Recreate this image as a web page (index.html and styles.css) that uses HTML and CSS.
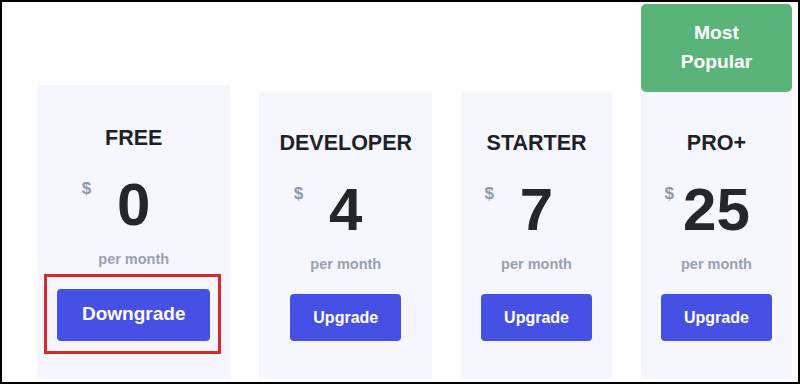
FILE: index.html
```html
<!DOCTYPE html>
<html lang="en">
<head>
    <meta charset="UTF-8">
    <meta name="viewport" content="width=device-width, initial-scale=1.0">
    <title>Pricing</title>
    <link rel="stylesheet" href="styles.css">
</head>
<body>
    <div class="frame">
        <div class="plan">
            <div class="card card-current">
                <h2>FREE</h2>
                <div class="price"><span class="currency">$</span><span class="amount">0</span></div>
                <div class="period">per month</div>
                <button class="btn btn-downgrade">Downgrade</button>
            </div>
        </div>
        <div class="plan">
            <div class="card">
                <h2>DEVELOPER</h2>
                <div class="price"><span class="currency">$</span><span class="amount">4</span></div>
                <div class="period">per month</div>
                <button class="btn">Upgrade</button>
            </div>
        </div>
        <div class="plan">
            <div class="card">
                <h2>STARTER</h2>
                <div class="price"><span class="currency">$</span><span class="amount">7</span></div>
                <div class="period">per month</div>
                <button class="btn">Upgrade</button>
            </div>
        </div>
        <div class="plan">
            <div class="badge">Most<br>Popular</div>
            <div class="card">
                <h2>PRO+</h2>
                <div class="price"><span class="currency">$</span><span class="amount">25</span></div>
                <div class="period">per month</div>
                <button class="btn">Upgrade</button>
            </div>
        </div>
    </div>
</body>
</html>
```

FILE: styles.css
```css
body {
    margin: 0;
    font-family: "Liberation Sans", Arial, sans-serif;
    background-color: #fff;
}
.frame {
    width: 800px;
    height: 384px;
    box-sizing: border-box;
    border: 2px solid #000;
    padding: 0 0 3px 35px;
    display: flex;
    align-items: flex-end;
    gap: 29px;
}
.plan {
    display: flex;
    flex-direction: column;
}
.badge {
    background-color: #5ab378;
    color: #fff;
    font-size: 19.2px;
    font-weight: bold;
    line-height: 29px;
    text-align: center;
    padding: 14px 10px 16px;
    border-radius: 5px;
}
.card {
    background-color: #f6f7fe;
    padding: 38px 20px;
    display: flex;
    flex-direction: column;
    align-items: center;
    text-align: center;
}
.card-current {
    padding-top: 40px;
}
.card h2 {
    margin: 0;
    font-size: 21.5px;
    line-height: 26px;
    color: #1e2127;
}
.price {
    margin-top: 24px;
    width: 104px;
    display: grid;
    grid-template-columns: 16px 1fr 16px;
}
.currency {
    margin-top: 5px;
    font-size: 17px;
    line-height: 17px;
    font-weight: bold;
    color: #8e98ab;
    text-align: left;
}
.amount {
    font-size: 60px;
    line-height: 60px;
    font-weight: bold;
    color: #23262b;
    text-align: center;
}
.period {
    margin-top: 15px;
    font-size: 14.5px;
    line-height: 18px;
    font-weight: bold;
    color: #98a0b1;
}
.btn {
    margin-top: 21px;
    padding: 14px 23px;
    font-family: inherit;
    font-size: 16px;
    line-height: 19px;
    font-weight: bold;
    color: #fff;
    background-color: #4650e5;
    border: none;
    border-radius: 4px;
    cursor: pointer;
}
.btn-downgrade {
    position: relative;
    padding: 14px 25px 16px;
    font-size: 19px;
    line-height: 22px;
}
.btn-downgrade::after {
    content: "";
    position: absolute;
    top: -15px;
    right: -11px;
    bottom: -13px;
    left: -13px;
    border: 3px solid #d42a2a;
}
```
